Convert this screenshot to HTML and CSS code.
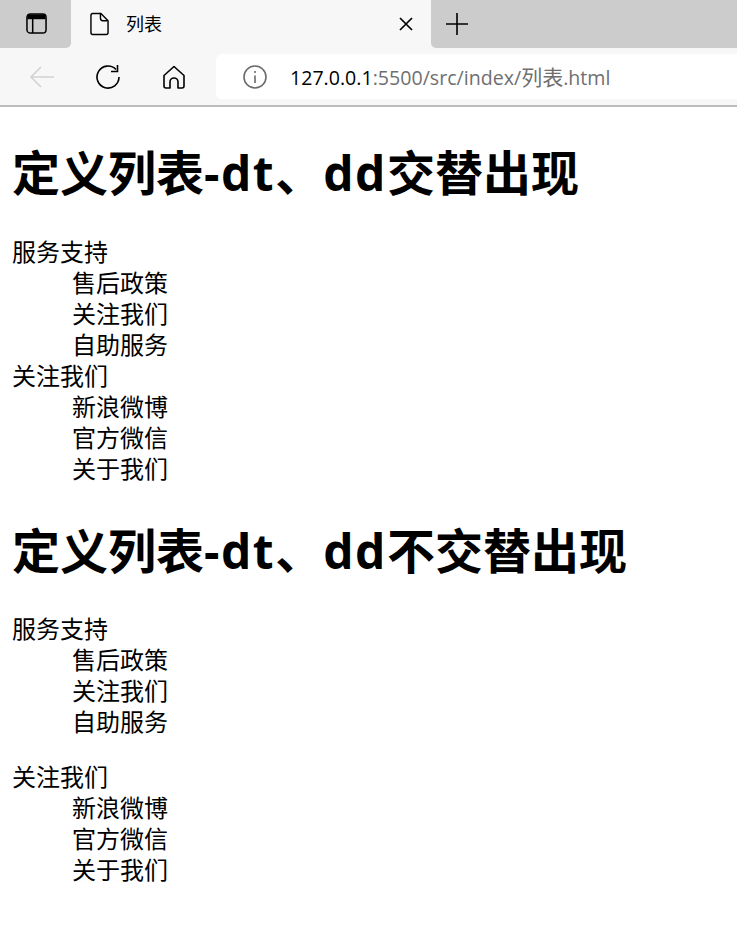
FILE: index.html
```html
<!DOCTYPE html>
<html lang="zh-CN">
<head>
<meta charset="utf-8">
<title>列表</title>
<link rel="stylesheet" href="styles.css">
</head>
<body>
<header class="browser">
  <div class="tabstrip">
    <div class="tab-actions">
      <svg width="21" height="21" viewBox="0 0 22 22" fill="none" stroke="#000" stroke-width="1.600"><rect x="1" y="1" width="20" height="20" rx="3.500"/><path d="M1.500 4h19" stroke-width="5"/><path d="M7 6v15"/></svg>
    </div>
    <div class="tab">
      <svg class="tab-icon" width="19" height="24" viewBox="0 0 20 24" fill="none" stroke="#000" stroke-width="1.500"><path d="M1 3a2 2 0 0 1 2-2h8.500L19 8.500V21a2 2 0 0 1-2 2H3a2 2 0 0 1-2-2z" stroke-linejoin="round"/><path d="M11 1.500V6a2.500 2.500 0 0 0 2.500 2.500H18.500"/></svg>
      <span class="tab-title">列表</span>
      <svg class="tab-close" width="14" height="14" viewBox="0 0 14 14" stroke="#000" stroke-width="1.700"><path d="M1 1l12 12M13 1L1 13"/></svg>
    </div>
    <div class="tab-rest">
      <svg width="22" height="22" viewBox="0 0 22 22" stroke="#000" stroke-width="1.600"><path d="M0 11h22M11 0v22"/></svg>
    </div>
  </div>
  <div class="toolbar">
    <svg class="nav-back" width="26" height="24" viewBox="0 0 26 24" fill="none" stroke="#d2d2d2" stroke-width="1.600"><path d="M25 12H2M12 2L2 12l10 10"/></svg>
    <svg class="nav-reload" width="26" height="26" viewBox="0 0 26 26" fill="none" stroke="#000" stroke-width="1.600"><path d="M21 5.500A11 11 0 1 0 24 13"/><path d="M22.500 1v6.500H16"/></svg>
    <svg class="nav-home" width="24" height="24" viewBox="0 0 24 24" fill="none" stroke="#000" stroke-width="1.600"><path d="M2 10.500L12 1.500l10 9V21a2 2 0 0 1-2 2h-4v-6a4 4 0 0 0-8 0v6H4a2 2 0 0 1-2-2z" stroke-linejoin="round"/></svg>
    <div class="address">
      <svg class="info" width="24" height="24" viewBox="0 0 24 24" fill="none" stroke="#6b6b6b" stroke-width="1.600"><circle cx="12" cy="12" r="11"/><path d="M12 10.500v7.500M12 6v2"/></svg>
      <span class="url"><span class="host">127.0.0.1</span>:5500/src/index/<span class="url-cjk">列表</span>.html</span>
    </div>
  </div>
</header>
<main class="page">
  <h1>定义列表<span class="latin">-dt</span>、<span class="latin">dd</span>交替出现</h1>
  <dl>
    <dt>服务支持</dt>
    <dd>售后政策</dd>
    <dd>关注我们</dd>
    <dd>自助服务</dd>
    <dt>关注我们</dt>
    <dd>新浪微博</dd>
    <dd>官方微信</dd>
    <dd>关于我们</dd>
  </dl>
  <h1>定义列表<span class="latin">-dt</span>、<span class="latin">dd</span>不交替出现</h1>
  <dl>
    <dt>服务支持</dt>
    <dd>售后政策</dd>
    <dd>关注我们</dd>
    <dd>自助服务</dd>
  </dl>
  <dl>
    <dt>关注我们</dt>
    <dd>新浪微博</dd>
    <dd>官方微信</dd>
    <dd>关于我们</dd>
  </dl>
</main>
</body>
</html>
```
FILE: styles.css
```css
* { box-sizing: border-box; }
html, body { margin: 0; padding: 0; }
body {
  background: #fff;
  color: #000;
  font-family: "Liberation Sans", "Noto Sans CJK SC", sans-serif;
  overflow: hidden;
  height: 948px;
}
.browser { height: 107px; background: #f7f7f7; border-bottom: 2px solid #bdbdbd; }
.tabstrip { height: 48px; display: flex; }
.tab-actions {
  width: 71px;
  background: #cccccc;
  border-bottom-right-radius: 5px;
  display: flex;
  align-items: center;
  padding: 0 0 2px 26px;
}
.tab {
  width: 360px;
  border-radius: 7px 7px 0 0;
  display: flex;
  align-items: center;
  padding: 0 0 0 19px;
}
.tab-title { font-size: 18px; margin-left: 17px; margin-top: -2px; flex: 1; }
.tab-close { margin-right: 18px; margin-top: -1px; }
.tab-rest {
  flex: 1;
  background: #cccccc;
  border-bottom-left-radius: 5px;
  display: flex;
  align-items: center;
  padding: 0 0 0 15px;
}
.toolbar { height: 57px; display: flex; align-items: center; padding-left: 29px; }
.nav-back { margin-right: 40px; }
.nav-reload { margin-right: 41px; }
.nav-home { margin-right: 30px; }
.address {
  flex: 1;
  height: 45px;
  background: #fff;
  border-radius: 6px 0 0 6px;
  display: flex;
  align-items: center;
  padding-left: 27px;
}
.url { font-family: "Open Sans", "Noto Sans CJK SC", sans-serif; font-size: 19.600px; color: #6f6f6f; margin-left: 23px; margin-top: -2px; }
.url-cjk { font-size: 21px; }
.host { color: #000; }
.page { padding: 0 12px; }
h1 { font-family: "Open Sans", "Noto Sans CJK SC", sans-serif; font-size: 48px; font-weight: 700; line-height: 62.500px; padding-top: 3px; margin: 32px 0; }
.latin { letter-spacing: 1.500px; }
dl { margin: 24px 0; font-size: 24px; line-height: 31px; }
dd { margin: 0 0 0 60px; }
```
